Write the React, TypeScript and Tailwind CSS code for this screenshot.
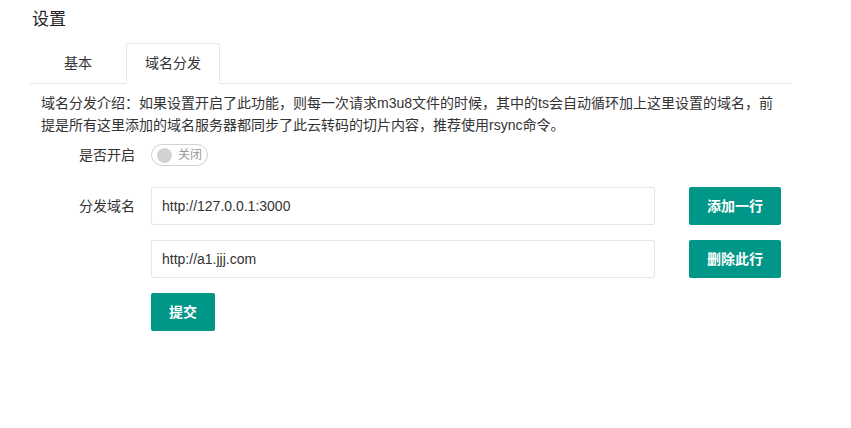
import React, { useState } from 'react';

const font = { fontFamily: '"Liberation Sans", "Noto Sans CJK SC", sans-serif' };

const Switch: React.FC = () => (
  <div className="relative flex h-[22px] w-[57px] items-center rounded-full border border-[#d2d2d2] bg-white">
    <span className="ml-[5px] h-[15px] w-[15px] rounded-full bg-[#d2d2d2]" />
    <span className="ml-[6px] text-[12px] leading-none text-[#999]">关闭</span>
  </div>
);

export default function App() {
  const [domains, setDomains] = useState(['http://127.0.0.1:3000', 'http://a1.jjj.com']);

  return (
    <div style={font} className="min-h-[428px] w-[851px] bg-white text-[#333]">
      <div className="w-[791px] pl-[30px] pt-[9px]">
        <h2 className="pl-[2px] text-[17px] leading-[22px] text-[#222]">设置</h2>

        {/* Tabs */}
        <div className="mt-[12px] flex border-b border-[#e6e6e6]">
          <div className="flex h-[40px] w-[96px] items-center justify-center text-[14px]">基本</div>
          <div className="-mb-px flex h-[41px] w-[94px] items-center justify-center rounded-t-[2px] border border-b-white border-[#e6e6e6] bg-white text-[14px]">
            域名分发
          </div>
        </div>

        <p className="mt-[8px] pl-[11px] text-[14px] leading-[22px]">
          域名分发介绍：如果设置开启了此功能，则每一次请求m3u8文件的时候，其中的ts会自动循环加上这里设置的域名，前
          <br />
          提是所有这里添加的域名服务器都同步了此云转码的切片内容，推荐使用rsync命令。
        </p>

        <div className="flex h-[38px] items-center">
          <label className="w-[121px] pr-[16px] text-right text-[14px]">是否开启</label>
          <Switch />
        </div>

        <div className="mt-[13px] flex flex-col gap-[15px]">
          {domains.map((d, i) => (
            <div key={i} className="flex items-center">
              <label className="w-[121px] pr-[16px] text-right text-[14px]">{i === 0 ? '分发域名' : ''}</label>
              <input
                value={d}
                onChange={(e) => setDomains(domains.map((v, j) => (j === i ? e.target.value : v)))}
                className="h-[38px] w-[504px] rounded-[2px] border border-[#e6e6e6] px-[10px] text-[14px] text-[#333] outline-none"
              />
              <button
                onClick={() =>
                  i === 0 ? setDomains([...domains, '']) : setDomains(domains.filter((_, j) => j !== i))
                }
                className="ml-[34px] h-[38px] w-[92px] rounded-[2px] bg-[#009688] text-[14px] font-semibold text-white"
              >
                {i === 0 ? '添加一行' : '删除此行'}
              </button>
            </div>
          ))}
          <div className="flex">
            <div className="w-[121px]" />
            <button className="h-[38px] w-[64px] rounded-[2px] bg-[#009688] text-[14px] font-semibold text-white">提交</button>
          </div>
        </div>
      </div>
    </div>
  );
}
